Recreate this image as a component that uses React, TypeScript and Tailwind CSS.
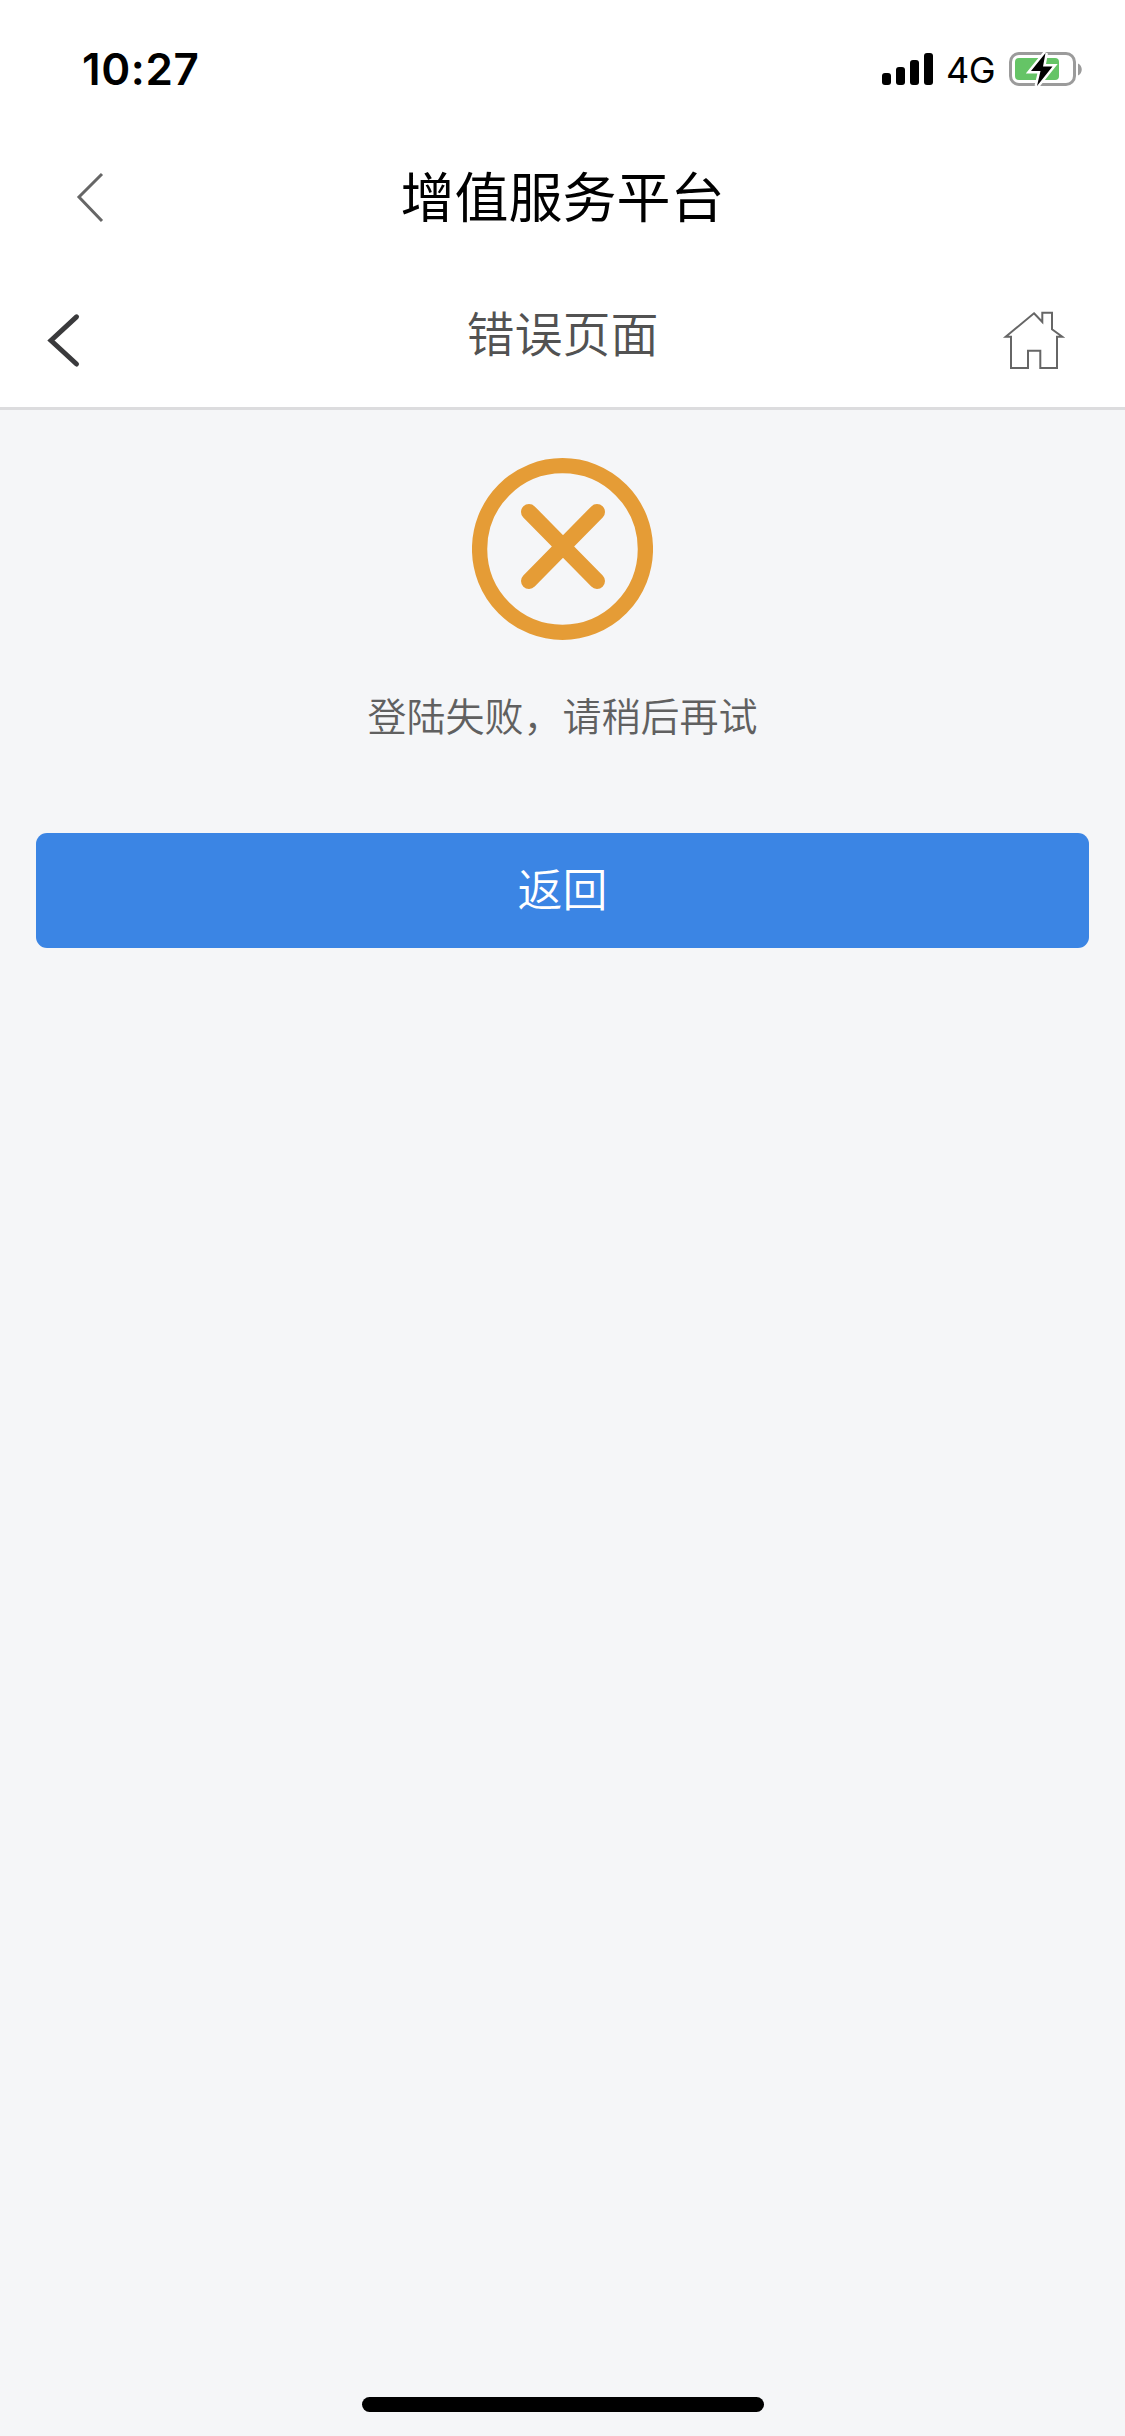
const cjk = "font-['Noto_Sans_CJK_SC',sans-serif]";

const signalBars = ["h-3", "h-[18px]", "h-[25px]", "h-8"];

function Signal() {
  return (
    <div className="flex h-8 items-end gap-[5px]">
      {signalBars.map((height) => (
        <span key={height} className={`w-[9px] rounded-[3px] bg-black ${height}`} />
      ))}
    </div>
  );
}

function Battery() {
  return (
    <svg className="h-[40px] w-[76px]" viewBox="0 0 76 40" fill="none">
      <rect x="1.5" y="4.5" width="64" height="31" rx="8.5" stroke="#9b9b9b" strokeWidth="3" />
      <path d="M69 14.5c5 2 5 10 0 12z" fill="#9b9b9b" />
      <rect x="6" y="9" width="44" height="22" rx="4" fill="#65c466" />
      <path
        d="M36.5 4 22 22h9.5L28 37l15.500-19.500h-9.500z"
        fill="#000"
        stroke="#fff"
        strokeWidth="5"
        paintOrder="stroke"
      />
    </svg>
  );
}

function StatusBar() {
  return (
    <div className="flex h-[138px] items-start justify-between pt-[49px] pr-[40px] pl-[82px] font-[Inter,sans-serif] text-black">
      <span className="text-[44px] leading-10 font-semibold tracking-[0.6px]">10:27</span>
      <div className="flex h-10 items-center">
        <Signal />
        <span className="ml-[13px] w-[50px] pt-0.5 text-[36px] leading-10 tracking-[-0.5px]">4G</span>
        <span className="ml-[13px]">
          <Battery />
        </span>
      </div>
    </div>
  );
}

function TitleBar() {
  return (
    <div className="grid h-[132px] grid-cols-[1fr_auto_1fr] items-start">
      <button className="mt-[33px] ml-[76px] w-8" aria-label="返回">
        <svg className="h-[52px] w-8" viewBox="0 0 32 52" fill="none">
          <path d="M26 3 3 26l23 24" stroke="#666" strokeWidth="3" />
        </svg>
      </button>
      <h1 className="mt-[17px] text-[54px] leading-[80px] text-black">增值服务平台</h1>
    </div>
  );
}

function PageBar() {
  return (
    <div className="grid h-[140px] grid-cols-[1fr_auto_1fr] items-start border-b-3 border-[#dcdcde]">
      <button className="mt-[40px] ml-[44px] w-10" aria-label="后退">
        <svg className="h-[60px] w-10" viewBox="0 0 40 60" fill="none">
          <path d="M32.5 6.8 7 30.5 32.5 54" stroke="#3a3a3c" strokeWidth="5" strokeLinecap="round" />
        </svg>
      </button>
      <h2 className="mt-[26px] text-[48px] leading-[70px] font-[350] text-[#525252]">错误页面</h2>
      <button className="mt-[38px] mr-[60px] justify-self-end" aria-label="首页">
        <svg className="h-[64px] w-[65px]" viewBox="0 0 65 64" fill="none">
          <path
            d="M34 5.3 42.3 14V4.7H52v16.6l10.3 7.4H57V60H40.3V42.7H28V60H11V28.7H5.7z"
            stroke="#666"
            strokeWidth="2"
          />
        </svg>
      </button>
    </div>
  );
}

function ErrorIcon() {
  return (
    <svg className="h-[182px] w-[181px]" viewBox="0 0 181 182" fill="none" stroke="#e59c36">
      <ellipse cx="90.5" cy="91" rx="82.9" ry="83.3" strokeWidth="15.3" />
      <path d="M57 54l68 69M125 54l-68 69" strokeWidth="16" strokeLinecap="round" />
    </svg>
  );
}

export default function App() {
  return (
    <div className={`flex h-[2436px] w-[1125px] flex-col bg-[#f5f6f8] ${cjk}`}>
      <header className="bg-white">
        <StatusBar />
        <TitleBar />
        <PageBar />
      </header>

      <main className="flex flex-1 flex-col items-center px-9 pt-12">
        <ErrorIcon />
        <p className="mt-11 text-[39px] leading-[60px] font-[350] text-[#606060]">登陆失败，请稍后再试</p>
        <button className="mt-[89px] h-[115px] w-full rounded-[11px] bg-[#3b85e4] pb-1.5 text-[45px] font-[350] text-white">
          返回
        </button>
      </main>

      <div className="mx-auto mb-6 h-[15px] w-[402px] rounded-full bg-black" />
    </div>
  );
}
